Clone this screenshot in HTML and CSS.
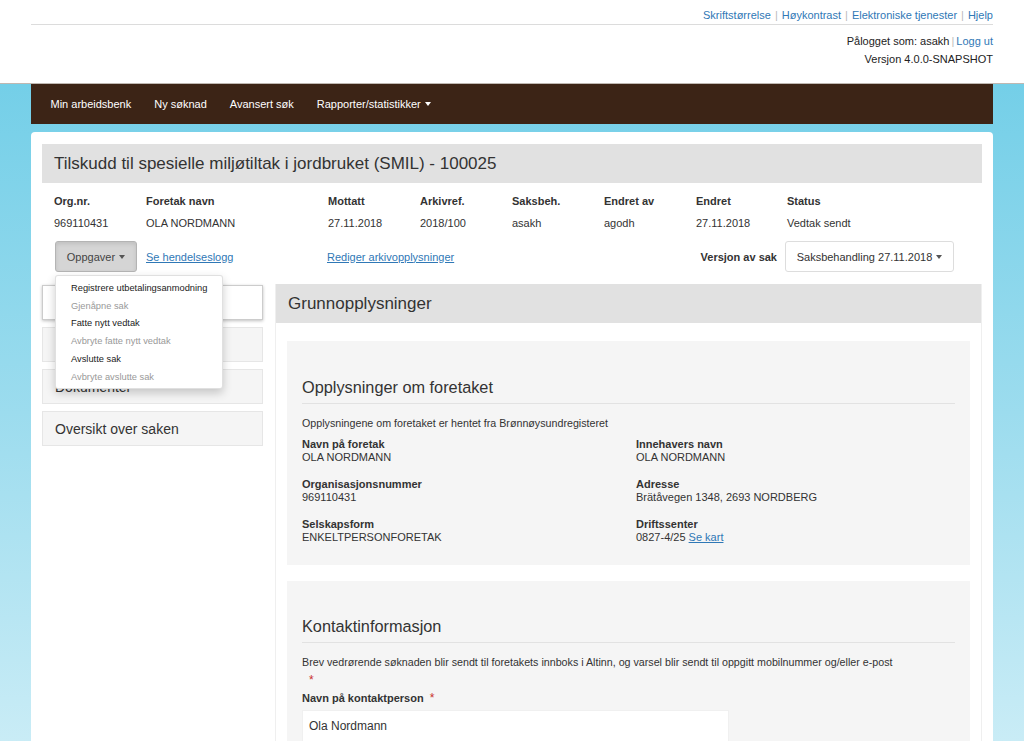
FILE: index.html
```html
<!DOCTYPE html>
<html lang="no">
<head>
<meta charset="utf-8">
<title>Tilskudd til spesielle miljøtiltak i jordbruket (SMIL)</title>
<link rel="stylesheet" href="styles.css">
</head>
<body>
<header class="site-header">
  <div class="container">
    <div class="top-links">
      <a href="#">Skriftstørrelse</a><span class="sep">|</span><a href="#">Høykontrast</a><span class="sep">|</span><a href="#">Elektroniske tjenester</a><span class="sep">|</span><a href="#">Hjelp</a>
    </div>
    <div class="user-line">Pålogget som: asakh<span class="sep sep-tight">|</span><a href="#">Logg ut</a></div>
    <div class="version-line">Versjon 4.0.0-SNAPSHOT</div>
  </div>
</header>
<div class="page">
  <nav class="main-nav">
    <a href="#">Min arbeidsbenk</a>
    <a href="#">Ny søknad</a>
    <a href="#">Avansert søk</a>
    <a href="#">Rapporter/statistikker <span class="caret caret-light"></span></a>
  </nav>
  <main class="card">
    <h1 class="case-title">Tilskudd til spesielle miljøtiltak i jordbruket (SMIL) - 100025</h1>
    <div class="case-grid">
      <div class="th">Org.nr.</div>
      <div class="th">Foretak navn</div>
      <div class="th">Mottatt</div>
      <div class="th">Arkivref.</div>
      <div class="th">Saksbeh.</div>
      <div class="th">Endret av</div>
      <div class="th">Endret</div>
      <div class="th">Status</div>
      <div class="td">969110431</div>
      <div class="td">OLA NORDMANN</div>
      <div class="td">27.11.2018</div>
      <div class="td">2018/100</div>
      <div class="td">asakh</div>
      <div class="td">agodh</div>
      <div class="td">27.11.2018</div>
      <div class="td">Vedtak sendt</div>
    </div>
    <div class="action-row">
      <div class="dropdown">
        <button class="btn btn-active" type="button">Oppgaver <span class="caret"></span></button>
        <ul class="dropdown-menu">
          <li>Registrere utbetalingsanmodning</li>
          <li class="disabled">Gjenåpne sak</li>
          <li>Fatte nytt vedtak</li>
          <li class="disabled">Avbryte fatte nytt vedtak</li>
          <li>Avslutte sak</li>
          <li class="disabled">Avbryte avslutte sak</li>
        </ul>
      </div>
      <a class="link" href="#">Se hendelseslogg</a>
      <a class="link" href="#">Rediger arkivopplysninger</a>
      <div class="version-select">
        <span class="version-label">Versjon av sak</span>
        <button class="btn btn-white" type="button">Saksbehandling 27.11.2018 <span class="caret"></span></button>
      </div>
    </div>
    <div class="content-row">
      <aside class="sidebar">
        <div class="side-item active">Grunnopplysninger</div>
        <div class="side-item">Saksbehandling</div>
        <div class="side-item">Dokumenter</div>
        <div class="side-item">Oversikt over saken</div>
      </aside>
      <section class="main-panel">
        <h2 class="panel-title">Grunnopplysninger</h2>
        <div class="panel-body">
          <div class="well">
            <h3 class="well-title">Opplysninger om foretaket</h3>
            <p class="intro">Opplysningene om foretaket er hentet fra Brønnøysundregisteret</p>
            <div class="fields">
              <div class="field"><div class="label">Navn på foretak</div><div class="value">OLA NORDMANN</div></div>
              <div class="field"><div class="label">Innehavers navn</div><div class="value">OLA NORDMANN</div></div>
              <div class="field"><div class="label">Organisasjonsnummer</div><div class="value">969110431</div></div>
              <div class="field"><div class="label">Adresse</div><div class="value">Brätåvegen 1348, 2693 NORDBERG</div></div>
              <div class="field"><div class="label">Selskapsform</div><div class="value">ENKELTPERSONFORETAK</div></div>
              <div class="field"><div class="label">Driftssenter</div><div class="value">0827-4/25 <a class="link" href="#">Se kart</a></div></div>
            </div>
          </div>
          <div class="well well-second">
            <h3 class="well-title">Kontaktinformasjon</h3>
            <p class="intro">Brev vedrørende søknaden blir sendt til foretakets innboks i Altinn, og varsel blir sendt til oppgitt mobilnummer og/eller e-post</p>
            <div class="req-line"><span class="req">*</span></div>
            <label class="label form-label">Navn på kontaktperson <span class="req">*</span></label>
            <div class="input">Ola Nordmann</div>
          </div>
        </div>
      </section>
    </div>
  </main>
</div>
</body>
</html>
```
FILE: styles.css
```css
html { overflow: hidden; }
body {
  margin: 0;
  font-family: "Liberation Sans", Arial, sans-serif;
  font-size: 11px;
  color: #333;
  background: #fff;
}
a { color: #2f78b6; text-decoration: none; }
.link { color: #2f78b6; text-decoration: underline; }

.site-header {
  height: 83px;
  border-bottom: 1px solid #bfb8b2;
  background: #fff;
}
.container { margin: 0 31px; text-align: right; }
.top-links {
  padding-top: 8px;
  line-height: 15px;
  height: 15px;
  padding-bottom: 1px;
  border-bottom: 1px solid #dcdcdc;
}
.sep { color: #bbb; margin: 0 4px; }
.sep-tight { margin: 0 2px; }
.user-line { margin-top: 7px; line-height: 18px; color: #222; }
.version-line { line-height: 18px; color: #222; }

.page {
  height: 657px;
  overflow: hidden;
  background: linear-gradient(to bottom, #74cfe8 0%, #9cdcee 50%, #c9ecf6 100%);
}
.main-nav {
  margin: 0 31px;
  height: 40px;
  background: #3c2416;
  display: flex;
  align-items: center;
  padding-left: 8px;
}
.main-nav a {
  color: #fff;
  font-size: 11px;
  padding: 0 11.5px;
  line-height: 40px;
}
.caret {
  display: inline-block;
  width: 0; height: 0;
  border-top: 4px solid #555;
  border-left: 3.5px solid transparent;
  border-right: 3.5px solid transparent;
  vertical-align: middle;
  margin-left: 1px;
  margin-top: -2px;
}
.caret-light { border-top-color: #fff; }

.card {
  display: block;
  margin: 8px 31px 0;
  background: #fff;
  border-radius: 4px 4px 0 0;
  padding: 12px 11px 0;
  min-height: 700px;
}
.case-title {
  margin: 0;
  height: 39px;
  line-height: 39px;
  background: #e1e1e1;
  font-size: 17px;
  font-weight: normal;
  padding-left: 12px;
  color: #333;
}
.case-grid {
  display: grid;
  grid-template-columns: 92px 182px 92px 92px 92px 92px 91px 1fr;
  padding-left: 12px;
  margin-top: 7px;
}
.th { font-weight: bold; line-height: 22px; }
.td { line-height: 22px; }

.action-row {
  display: grid;
  grid-template-columns: 91px 181px 1fr auto;
  align-items: center;
  padding-left: 13px;
  padding-right: 28px;
  margin-top: 7px;
  height: 31px;
}
.dropdown { position: relative; }
.btn {
  height: 31px;
  font-family: inherit;
  font-size: 11px;
  color: #333;
  border-radius: 3px;
  cursor: pointer;
}
.btn-active {
  width: 82px;
  background: #d5d5d5;
  border: 1px solid #b4b4b4;
  box-shadow: inset 0 2px 4px rgba(0,0,0,0.1);
  color: #444;
}
.btn-white {
  width: 169px;
  background: #fff;
  border: 1px solid #ddd;
  padding: 0 10px;
}
.version-select { display: flex; align-items: center; gap: 8px; }
.version-label { font-weight: bold; }

.dropdown-menu {
  position: absolute;
  z-index: 5;
  top: 34px;
  left: 0;
  width: 168px;
  margin: 0;
  padding: 4px 0 5px;
  list-style: none;
  background: #fff;
  border: 1px solid rgba(0,0,0,0.12);
  border-radius: 3px;
  box-shadow: 0 4px 10px rgba(0,0,0,0.2);
  box-sizing: border-box;
  height: 114px;
}
.dropdown-menu li {
  font-size: 9.3px;
  line-height: 17.7px;
  padding-left: 15px;
  color: #222;
  white-space: nowrap;
}
.dropdown-menu li.disabled { color: #999; }

.content-row {
  display: flex;
  gap: 12px;
  margin-top: 12px;
  align-items: flex-start;
}
.sidebar {
  width: 221px;
  flex: none;
  display: flex;
  flex-direction: column;
  gap: 7px;
  padding-top: 1px;
}
.side-item {
  height: 35px;
  line-height: 35px;
  box-sizing: border-box;
  padding-left: 12px;
  font-size: 14px;
  background: #f5f5f5;
  border: 1px solid #e6e6e6;
  color: #333;
}
.side-item.active {
  background: #fff;
  border: 1px solid #ccc;
  box-shadow: 0 1px 3px rgba(0,0,0,0.25);
}

.main-panel {
  flex: 1;
  border-left: 1px solid #efefef;
  border-right: 1px solid #efefef;
  min-height: 480px;
}
.panel-title {
  margin: 0;
  height: 39px;
  line-height: 39px;
  background: #e1e1e1;
  font-size: 17px;
  font-weight: normal;
  padding-left: 12px;
  color: #333;
}
.panel-body { padding: 18px 11px 0; }
.well {
  background: #f5f5f5;
  padding: 36px 15px 7px;
}
.well-second { margin-top: 16px; padding-top: 35px; }
.well-title {
  margin: 0;
  font-size: 16.3px;
  font-weight: normal;
  line-height: 20px;
  padding-bottom: 6px;
  border-bottom: 1px solid #e2e2e2;
  color: #333;
}
.intro { margin: 12px 0 0; line-height: 14px; font-size: 10.7px; }
.fields {
  display: grid;
  grid-template-columns: 334px 1fr;
  margin-top: 8px;
}
.field { margin-bottom: 14px; }
.label { font-weight: bold; line-height: 13px; display: block; }
.value { line-height: 13px; }
.req { color: #c9302c; font-size: 12px; font-weight: normal; }
.req-line { line-height: 14px; margin-top: 4px; padding-left: 7px; }
.form-label { margin-top: 4px; line-height: 14px; }
.form-label .req { margin-left: 3px; }
.input {
  margin-top: 5px;
  width: 427px;
  height: 31px;
  line-height: 31px;
  box-sizing: border-box;
  background: #fff;
  border: 1px solid #f0f0f0;
  border-bottom: none;
  padding-left: 6px;
  font-size: 12px;
  color: #333;
}
```
